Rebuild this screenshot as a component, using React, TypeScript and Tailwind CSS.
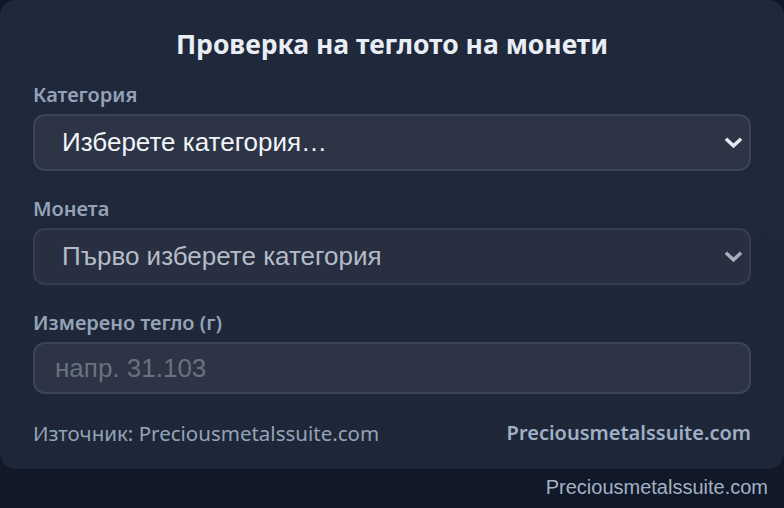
import React from "react";

function Chevron({ className }: { className: string }) {
  return (
    <svg viewBox="0 0 20 13" className={className} fill="none">
      <path d="M2 2.5 L10 10 L18 2.5" stroke="currentColor" strokeWidth="3.6" strokeLinecap="butt" strokeLinejoin="miter" />
    </svg>
  );
}

export default function App() {
  const ui = { fontFamily: '"Noto Sans", "Open Sans", sans-serif' };
  const arial = { fontFamily: '"Liberation Sans", Arial, sans-serif' };
  return (
    <div className="w-[784px] h-[508px] bg-[#111827] overflow-hidden">
      <div className="w-[784px] h-[469px] rounded-[16px] bg-gradient-to-b from-[#1f293b] to-[#1e2738] px-[33px] pt-[28px]" style={ui}>
        <h1 className="text-center text-[26.5px] leading-[32px] font-bold text-[#e9eef5]">Проверка на теглото на монети</h1>

        <div className="mt-[22px] flex flex-col">
          <label className="text-[20px] leading-[26px] font-semibold text-[#94a3b8]">Категория</label>
          <div className="relative mt-[6px]">
            <select className="w-full h-[57px] appearance-none rounded-[12px] border-2 border-[#3b4557] bg-[#2c3446] pl-[27px] text-[26px] text-[#f1f5f9] outline-none" style={arial}>
              <option>Изберете категория…</option>
            </select>
            <Chevron className="pointer-events-none absolute right-[8px] top-[22px] w-[19px] h-[13px] text-[#e5e9f0]" />
          </div>
        </div>

        <div className="mt-[25px] flex flex-col">
          <label className="text-[20px] leading-[26px] font-semibold text-[#94a3b8]">Монета</label>
          <div className="relative mt-[6px]">
            <select disabled className="w-full h-[57px] appearance-none rounded-[12px] border-2 border-[#353e50] bg-[#272f41] pl-[27px] text-[26px] text-[#b4bcc8] outline-none" style={arial}>
              <option>Първо изберете категория</option>
            </select>
            <Chevron className="pointer-events-none absolute right-[8px] top-[22px] w-[19px] h-[13px] text-[#a7afbb]" />
          </div>
        </div>

        <div className="mt-[25px] flex flex-col">
          <label className="text-[20px] leading-[26px] font-semibold text-[#94a3b8]">Измерено тегло (г)</label>
          <input
            placeholder="напр. 31.103"
            className="mt-[6px] w-full h-[52px] rounded-[12px] border-2 border-[#3b4557] bg-[#2c3446] px-[20px] text-[26px] text-[#f1f5f9] placeholder:text-[#6b717c] outline-none"
            style={arial}
          />
        </div>

        <div className="mt-[26px] flex items-center justify-between text-[20px] leading-[26px] text-[#94a3b8]">
          <span className="text-[20.5px]">Източник: Preciousmetalssuite.com</span>
          <span className="font-semibold text-[#9fb0c6]">Preciousmetalssuite.com</span>
        </div>
      </div>
      <div className="flex justify-end pr-[16px] pt-[6px] text-[20px] leading-[24px] text-[#a3b1c4]" style={arial}>
        Preciousmetalssuite.com
      </div>
    </div>
  );
}
